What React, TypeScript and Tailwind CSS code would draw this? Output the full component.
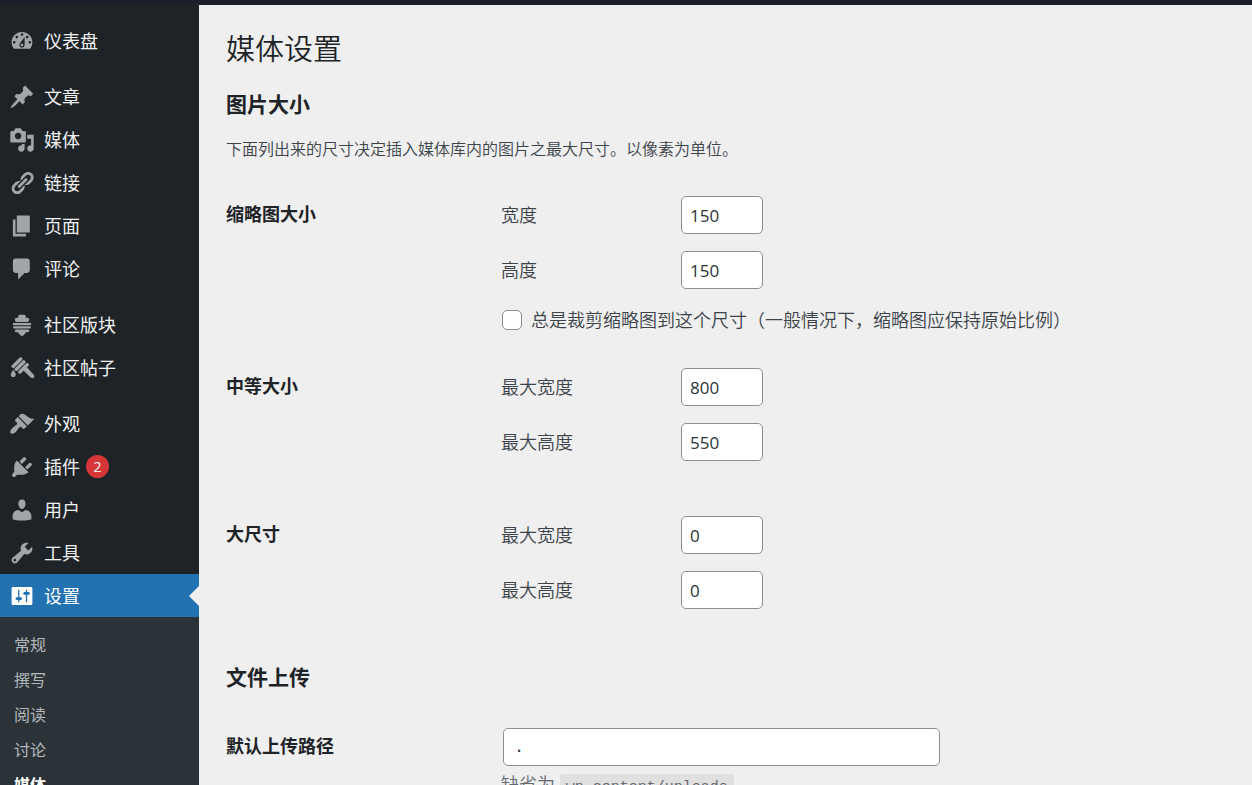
import React from 'react';
import clsx from 'clsx';

const icons = {
  dashboard:
    'M3.76 16h12.48c1.1-1.37 1.76-3.11 1.76-5 0-4.42-3.58-8-8-8s-8 3.58-8 8c0 1.89.66 3.63 1.76 5zM10 4c.55 0 1 .45 1 1s-.45 1-1 1-1-.45-1-1 .45-1 1-1zM6 6c.55 0 1 .45 1 1s-.45 1-1 1-1-.45-1-1 .45-1 1-1zm8 0c.55 0 1 .45 1 1s-.45 1-1 1-1-.45-1-1 .45-1 1-1zm-5.37 5.55L12 7v6c0 1.1-.9 2-2 2s-2-.9-2-2c0-.57.24-1.08.63-1.45zM4 10c.55 0 1 .45 1 1s-.45 1-1 1-1-.45-1-1 .45-1 1-1zm12 0c.55 0 1 .45 1 1s-.45 1-1 1-1-.45-1-1 .45-1 1-1zm-5 3c0-.55-.45-1-1-1s-1 .45-1 1 .45 1 1 1 1-.45 1-1z',
  post: 'M10.44 3.02l1.82-1.82 6.36 6.35-1.83 1.82c-1.05-.68-2.48-.57-3.41.36l-.75.75c-.92.93-1.04 2.35-.35 3.41l-1.83 1.82-2.41-2.41-2.8 2.79c-.42.42-3.38 2.71-3.8 2.29s1.86-3.39 2.28-3.81l2.79-2.79L4.1 9.36l1.83-1.82c1.05.69 2.48.57 3.4-.36l.75-.75c.93-.92 1.05-2.35.36-3.41z',
  media:
    'M13 11V4c0-.55-.45-1-1-1h-1.67L9 1H5L3.67 3H2c-.55 0-1 .45-1 1v7c0 .55.45 1 1 1h10c.55 0 1-.45 1-1zM7 4.5c1.38 0 2.5 1.12 2.5 2.5S8.38 9.5 7 9.5 4.5 8.38 4.5 7 5.62 4.5 7 4.5zM14 6h5v10.5c0 1.38-1.12 2.5-2.5 2.5S14 17.88 14 16.5s1.12-2.5 2.5-2.5c.17 0 .34.02.5.05V9h-3V6zm-4 8.05V13h2v3.5c0 1.38-1.12 2.5-2.5 2.5S7 17.88 7 16.5 8.12 14 9.5 14c.17 0 .34.02.5.05z',
  links:
    'M17.74 2.76c1.68 1.69 1.68 4.41 0 6.1l-1.53 1.52c-1.12 1.12-2.7 1.47-4.14 1.09l2.62-2.61.76-.77.76-.76c.84-.84.84-2.2 0-3.04-.84-.85-2.2-.85-3.04 0l-.77.76-3.38 3.38c-.37-1.44-.02-3.02 1.1-4.14l1.52-1.53c1.69-1.68 4.42-1.68 6.1 0zM8.59 13.43l5.34-5.34c.42-.42.42-1.1 0-1.52-.44-.43-1.13-.39-1.53 0l-5.33 5.34c-.42.42-.42 1.1 0 1.52.44.43 1.13.39 1.52 0zm-.76 2.29l4.14-4.15c.38 1.44.03 3.02-1.09 4.14l-1.52 1.53c-1.69 1.68-4.41 1.68-6.1 0-1.68-1.68-1.68-4.42 0-6.1l1.53-1.52c1.12-1.12 2.7-1.47 4.14-1.1l-4.14 4.15c-.85.84-.85 2.2 0 3.05.84.84 2.2.84 3.04 0z',
  page: 'M6 15V2h10v13H6zm-1 1h8v2H3V5h2v11z',
  comments: 'M5 2h9c1.1 0 2 .9 2 2v7c0 1.1-.9 2-2 2h-2l-5 5v-5H5c-1.1 0-2-.9-2-2V4c0-1.1.9-2 2-2z',
  forums:
    'M8.3 2.2h3.4a1.2 1.2 0 0 1 1.2 1.2v1H14a1.6 1.6 0 0 1 0 3.2H6a1.6 1.6 0 0 1 0-3.2h1.1v-1a1.2 1.2 0 0 1 1.2-1.2zM3.8 8.4h12.4a.9.9 0 0 1 0 1.8H3.8a.9.9 0 0 1 0-1.8zM4 10.9h12a.9.9 0 0 1 0 1.8H4a.9.9 0 0 1 0-1.8zM5.5 13.4h9a1.1 1.1 0 0 1 0 2.2h-1.7c.1 1-.5 1.500-1.2 1.600-.2.8-.7 1.300-1.600 1.300s-1.400-.5-1.600-1.300c-.7-.1-1.300-.6-1.200-1.600H5.500a1.1 1.1 0 0 1 0-2.200z',
  topics:
    'M2.3 7.8l5.7-5.6a1.3 1.3 0 0 1 1.9 1.9l-5.7 5.6a1.3 1.3 0 0 1-1.9-1.9zM4.7 10l5.700-5.600a1.300 1.300 0 0 1 1.900 1.900l-5.700 5.600a1.300 1.300 0 0 1-1.900-1.900zM7.400 12.100l5.600-5.500a1.300 1.300 0 0 1 1.900 1.900l-5.600 5.500a1.300 1.300 0 0 1-1.900-1.900zM13.300 8.900l5.700 6.200a1.600 1.600 0 0 1-2.300 2.300l-6.200-6zM3.300 11.300c1.200 1.500 1.900 2.700 1.900 3.800 0 1.200-.8 1.900-1.900 1.900s-1.900-.7-1.900-1.900c0-1.100.8-2.300 1.900-3.800z',
  appearance:
    'M14.48 11.06L7.41 3.99l1.5-1.5c.5-.56 2.3-.47 3.51.32 1.21.8 1.43 1.28 2.91 2.1 1.18.64 2.45 1.26 4.45.85zm-.71.71L6.7 4.7 4.93 6.47c-.39.39-.39 1.02 0 1.41l1.06 1.06c.39.39.39 1.03 0 1.42-.6.6-1.43 1.11-2.21 1.69-.35.26-.7.53-1.01.84C1.43 14.23.4 16.08 1.4 17.07c.99 1 2.84-.03 4.18-1.36.31-.31.58-.66.85-1.02.57-.78 1.08-1.61 1.69-2.21.39-.39 1.02-.39 1.41 0l1.06 1.06c.39.39 1.02.39 1.41 0z',
  plugins:
    'M13.11 4.36L9.87 7.6 8 5.73l3.24-3.24c.35-.34 1.05-.2 1.56.32.52.51.66 1.21.31 1.55zm-8 1.77l.91-1.12 9.01 9.01-1.19.84c-.71.71-2.63 1.16-3.82 1.16H6.14L4.9 17.26c-.59.59-1.54.59-2.12 0-.59-.58-.59-1.53 0-2.12l1.24-1.24v-3.88c0-1.13.4-3.19 1.09-3.89zm7.26 3.97l3.24-3.24c.34-.35 1.04-.21 1.55.31.52.51.66 1.21.31 1.55l-3.24 3.25z',
  users:
    'M10 9.25c-2.27 0-2.73-3.44-2.73-3.44C7 4.02 7.82 2 9.97 2c2.16 0 2.98 2.02 2.71 3.81 0 0-.41 3.44-2.68 3.44zm0 2.57L12.72 10c2.39 0 4.52 2.33 4.52 4.53v2.49s-3.65 1.13-7.24 1.13c-3.65 0-7.24-1.13-7.24-1.13v-2.49c0-2.25 1.94-4.48 4.47-4.48z',
  tools:
    'M16.68 9.77c-1.34 1.34-3.3 1.67-4.95.99l-5.41 6.52c-.99.99-2.59.99-3.58 0s-.99-2.59 0-3.57l6.52-5.42c-.68-1.65-.35-3.61.99-4.95 1.28-1.28 3.12-1.62 4.72-1.06l-2.89 2.89 2.82 2.82 2.86-2.87c.53 1.58.18 3.39-1.08 4.65zM3.81 16.21c.4.39 1.04.39 1.43 0 .4-.4.4-1.04 0-1.43-.39-.4-1.03-.4-1.43 0-.39.39-.39 1.03 0 1.43z',
  settings:
    'M18 16V4c0-.55-.45-1-1-1H3c-.55 0-1 .45-1 1v12c0 .55.45 1 1 1h14c.55 0 1-.45 1-1zM8 11h1c.55 0 1 .45 1 1s-.45 1-1 1H8v1.5c0 .28-.22.5-.5.5s-.5-.22-.5-.5V13H6c-.55 0-1-.45-1-1s.45-1 1-1h1V5.5c0-.28.22-.5.5-.5s.5.22.5.5V11zm5-2h-1c-.55 0-1-.45-1-1s.45-1 1-1h1V5.5c0-.28.22-.5.5-.5s.5.22.5.5V7h1c.55 0 1 .45 1 1s-.45 1-1 1h-1v5.5c0 .28-.22.5-.5.5s-.5-.22-.5-.5V9z',
};

interface MenuItem {
  label: string;
  icon: keyof typeof icons;
  badge?: number;
  current?: boolean;
}

const menuGroups: MenuItem[][] = [
  [{ label: '仪表盘', icon: 'dashboard' }],
  [
    { label: '文章', icon: 'post' },
    { label: '媒体', icon: 'media' },
    { label: '链接', icon: 'links' },
    { label: '页面', icon: 'page' },
    { label: '评论', icon: 'comments' },
  ],
  [
    { label: '社区版块', icon: 'forums' },
    { label: '社区帖子', icon: 'topics' },
  ],
  [
    { label: '外观', icon: 'appearance' },
    { label: '插件', icon: 'plugins', badge: 2 },
    { label: '用户', icon: 'users' },
    { label: '工具', icon: 'tools' },
    { label: '设置', icon: 'settings', current: true },
  ],
];

const submenu = ['常规', '撰写', '阅读', '讨论', '媒体'];

function MenuLink({ item }: { item: MenuItem }) {
  return (
    <a
      href="#"
      aria-current={item.current ? 'true' : undefined}
      className={clsx(
        'relative flex h-[43px] items-center pl-[9px] text-lg',
        item.current ? 'bg-[#2271b1] text-white' : 'text-[#f0f0f1]'
      )}
    >
      <svg
        viewBox="0 0 20 20"
        className={clsx('mr-[9px] size-[26px] shrink-0', item.current ? 'fill-white' : 'fill-[#a0a5aa]')}
        aria-hidden="true"
      >
        <path d={icons[item.icon]} />
      </svg>
      <span>{item.label}</span>
      {item.badge && (
        <span className="ml-[6px] flex size-[23px] items-center justify-center rounded-full bg-[#d63638] text-sm text-white">
          {item.badge}
        </span>
      )}
      {item.current && (
        <span className="absolute right-0 border-y-[10px] border-r-[10px] border-y-transparent border-r-[#efefef]" />
      )}
    </a>
  );
}

function Sidebar() {
  return (
    <nav className="w-[199px] shrink-0 bg-[#1d2327] pt-[14px]">
      <div className="space-y-[13px]">
        {menuGroups.map((group) => (
          <div key={group[0].label}>
            {group.map((item) => (
              <MenuLink key={item.label} item={item} />
            ))}
          </div>
        ))}
      </div>
      <ul className="bg-[#2c3338] py-[10px]">
        {submenu.map((label) => (
          <li key={label}>
            <a
              href="#"
              className={clsx(
                'flex h-[35px] items-center pl-[14px] text-base',
                label === '媒体' ? 'font-bold text-white' : 'text-[#b4b9bd]'
              )}
            >
              {label}
            </a>
          </li>
        ))}
      </ul>
    </nav>
  );
}

function SettingRow({ title, className, children }: { title: string; className?: string; children: React.ReactNode }) {
  return (
    <div role="group" aria-label={title} className={clsx('flex', className)}>
      <h3 className="w-[275px] shrink-0 text-lg/9 font-bold text-[#1d2327]">{title}</h3>
      <div className="flex-1">{children}</div>
    </div>
  );
}

function SizeField({ id, label, value }: { id: string; label: string; value: number }) {
  return (
    <div className="mb-[17px] flex items-center">
      <label htmlFor={id} className="w-[180px] text-lg">
        {label}
      </label>
      <input
        id={id}
        type="text"
        inputMode="numeric"
        defaultValue={value}
        className="h-[38px] w-[82px] rounded-[5px] border border-[#8c8f94] bg-white px-2 text-[17px] font-normal text-[#2c3338]"
      />
    </div>
  );
}

export default function App() {
  return (
    <div className="flex h-screen flex-col overflow-hidden bg-[#efefef] font-['Open_Sans','Noto_Sans_CJK_SC',sans-serif] text-[#3c434a]">
      <header className="h-[5px] shrink-0 bg-[#1d1f2a]" />
      <div className="flex flex-1">
        <Sidebar />
        <main className="flex-1 pt-6 pl-[27px] font-[350]">
          <h1 className="text-[29px]/10 text-[#1d2327]">媒体设置</h1>

          <form>
            <h2 className="mt-[19px] text-[21px]/8 font-bold text-[#1d2327]">图片大小</h2>
            <p className="mt-[17px] text-base/6">下面列出来的尺寸决定插入媒体库内的图片之最大尺寸。以像素为单位。</p>

            <SettingRow title="缩略图大小" className="mt-[35px]">
              <SizeField id="thumbnail-width" label="宽度" value={150} />
              <SizeField id="thumbnail-height" label="高度" value={150} />
              <div className="flex items-center">
                <input
                  id="thumbnail-crop"
                  type="checkbox"
                  className="mr-[9px] ml-px size-5 shrink-0 appearance-none rounded-[5px] border border-[#8c8f94] bg-white checked:bg-[#2271b1]"
                />
                <label htmlFor="thumbnail-crop" className="text-lg/7">
                  总是裁剪缩略图到这个尺寸（一般情况下，缩略图应保持原始比例）
                </label>
              </div>
            </SettingRow>

            <SettingRow title="中等大小" className="mt-[34px]">
              <SizeField id="medium-width" label="最大宽度" value={800} />
              <SizeField id="medium-height" label="最大高度" value={550} />
            </SettingRow>

            <SettingRow title="大尺寸" className="mt-[38px]">
              <SizeField id="large-width" label="最大宽度" value={0} />
              <SizeField id="large-height" label="最大高度" value={0} />
            </SettingRow>

            <h2 className="mt-[35px] text-[21px]/8 font-bold text-[#1d2327]">文件上传</h2>

            <SettingRow title="默认上传路径" className="mt-[35px]">
              <input
                type="text"
                aria-label="默认上传路径"
                defaultValue="."
                className="ml-[2px] block h-[38px] w-[437px] rounded-[5px] border border-[#8c8f94] bg-white px-[10px] font-['Liberation_Mono',monospace] text-[17px] text-[#2c3338]"
              />
              <p className="mt-1 text-lg/7 text-[#646970]">
                缺省为{' '}
                <code className="inline-block rounded-xs bg-[#e0e0e1] px-[6px] font-['Liberation_Mono',monospace] text-[15px]/7">
                  wp-content/uploads
                </code>
              </p>
            </SettingRow>
          </form>
        </main>
      </div>
    </div>
  );
}
